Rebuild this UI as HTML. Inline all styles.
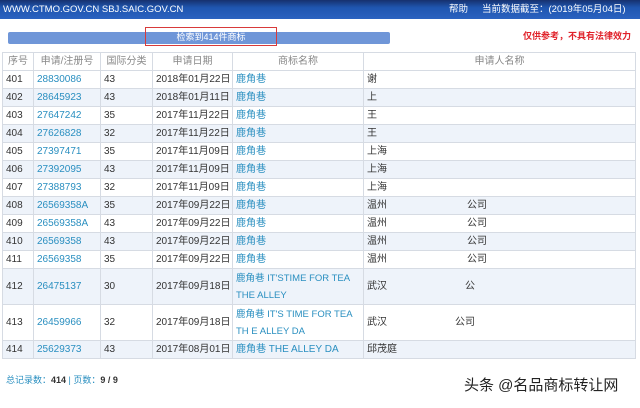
<!DOCTYPE html>
<html><head><style>
body{margin:0;width:640px;height:408px;overflow:hidden;background:#fff;font-family:"Liberation Sans","Noto Sans CJK SC",sans-serif;font-size:9px;color:#333}
.top{position:absolute;left:0;top:0;width:640px;height:19px;background:linear-gradient(#16306e,#1f56b0 40%,#2a62c0);color:#fff;font-size:9.5px;line-height:20px}
.bar{position:absolute;left:8px;top:32px;width:382px;height:12px;background:#6f96d8;border-radius:2px}
.box{position:absolute;left:145px;top:27px;width:132px;height:19px;border:1.5px solid #d83a3a;color:#fff;font-size:9px;line-height:19px;text-align:center;box-sizing:border-box}
.warn{position:absolute;left:523px;top:29px;color:#e0222a;font-weight:bold;font-size:9px}
table{position:absolute;left:2px;top:52px;border-collapse:collapse;width:634px;font-size:10px;table-layout:fixed}
td{border:1px solid #d6dbe3;height:18px;padding:0 0 0 3px;white-space:nowrap;line-height:17px;overflow:hidden;box-sizing:border-box}
tr.h td{color:#888;text-align:center;padding:0;height:18px}
tr:nth-child(odd):not(.h) td{background:#eef3fa}
.l{color:#2a8fc0}
.t td{height:36px}
.t td.w{white-space:normal;line-height:17px;font-size:9.5px}
.foot{position:absolute;left:6px;top:373px;color:#2a8fc0;font-size:9px}
.foot b{color:#333}
.wm{position:absolute;left:464px;top:374px;font-size:15px;color:#222}
</style></head><body>
<div class="top"><span style="position:absolute;left:3px">WWW.CTMO.GOV.CN SBJ.SAIC.GOV.CN</span><span style="position:absolute;left:449px">帮助</span><span style="position:absolute;left:482px">当前数据截至：(2019年05月04日)</span></div>
<div class="bar"></div><div class="box">检索到414件商标</div>
<div class="warn">仅供参考，不具有法律效力</div>
<table>
<colgroup><col style="width:31px"><col style="width:67px"><col style="width:52px"><col style="width:80px"><col style="width:131px"><col></colgroup>
<tr class="h"><td>序号</td><td>申请/注册号</td><td>国际分类</td><td>申请日期</td><td>商标名称</td><td>申请人名称</td></tr>
<tr><td>401</td><td class="l">28830086</td><td>43</td><td>2018年01月22日</td><td class="l">鹿角巷</td><td>谢</td></tr>
<tr><td>402</td><td class="l">28645923</td><td>43</td><td>2018年01月11日</td><td class="l">鹿角巷</td><td>上</td></tr>
<tr><td>403</td><td class="l">27647242</td><td>35</td><td>2017年11月22日</td><td class="l">鹿角巷</td><td>王</td></tr>
<tr><td>404</td><td class="l">27626828</td><td>32</td><td>2017年11月22日</td><td class="l">鹿角巷</td><td>王</td></tr>
<tr><td>405</td><td class="l">27397471</td><td>35</td><td>2017年11月09日</td><td class="l">鹿角巷</td><td>上海</td></tr>
<tr><td>406</td><td class="l">27392095</td><td>43</td><td>2017年11月09日</td><td class="l">鹿角巷</td><td>上海</td></tr>
<tr><td>407</td><td class="l">27388793</td><td>32</td><td>2017年11月09日</td><td class="l">鹿角巷</td><td>上海</td></tr>
<tr><td>408</td><td class="l">26569358A</td><td>35</td><td>2017年09月22日</td><td class="l">鹿角巷</td><td>温州<span style="padding-left:80px">公司</span></td></tr>
<tr><td>409</td><td class="l">26569358A</td><td>43</td><td>2017年09月22日</td><td class="l">鹿角巷</td><td>温州<span style="padding-left:80px">公司</span></td></tr>
<tr><td>410</td><td class="l">26569358</td><td>43</td><td>2017年09月22日</td><td class="l">鹿角巷</td><td>温州<span style="padding-left:80px">公司</span></td></tr>
<tr><td>411</td><td class="l">26569358</td><td>35</td><td>2017年09月22日</td><td class="l">鹿角巷</td><td>温州<span style="padding-left:80px">公司</span></td></tr>
<tr class="t"><td>412</td><td class="l">26475137</td><td>30</td><td>2017年09月18日</td><td class="l w">鹿角巷 IT'STIME FOR TEA THE ALLEY</td><td>武汉<span style="padding-left:78px">公</span></td></tr>
<tr class="t"><td>413</td><td class="l">26459966</td><td>32</td><td>2017年09月18日</td><td class="l w">鹿角巷 IT'S TIME FOR TEA TH E ALLEY DA</td><td>武汉<span style="padding-left:68px">公司</span></td></tr>
<tr><td>414</td><td class="l">25629373</td><td>43</td><td>2017年08月01日</td><td class="l">鹿角巷 THE ALLEY DA</td><td>邱茂庭</td></tr>
</table>
<div class="foot">总记录数：<b>414</b> | 页数：<b>9 / 9</b></div>
<div class="wm">头条 @名品商标转让网</div>
</body></html>
